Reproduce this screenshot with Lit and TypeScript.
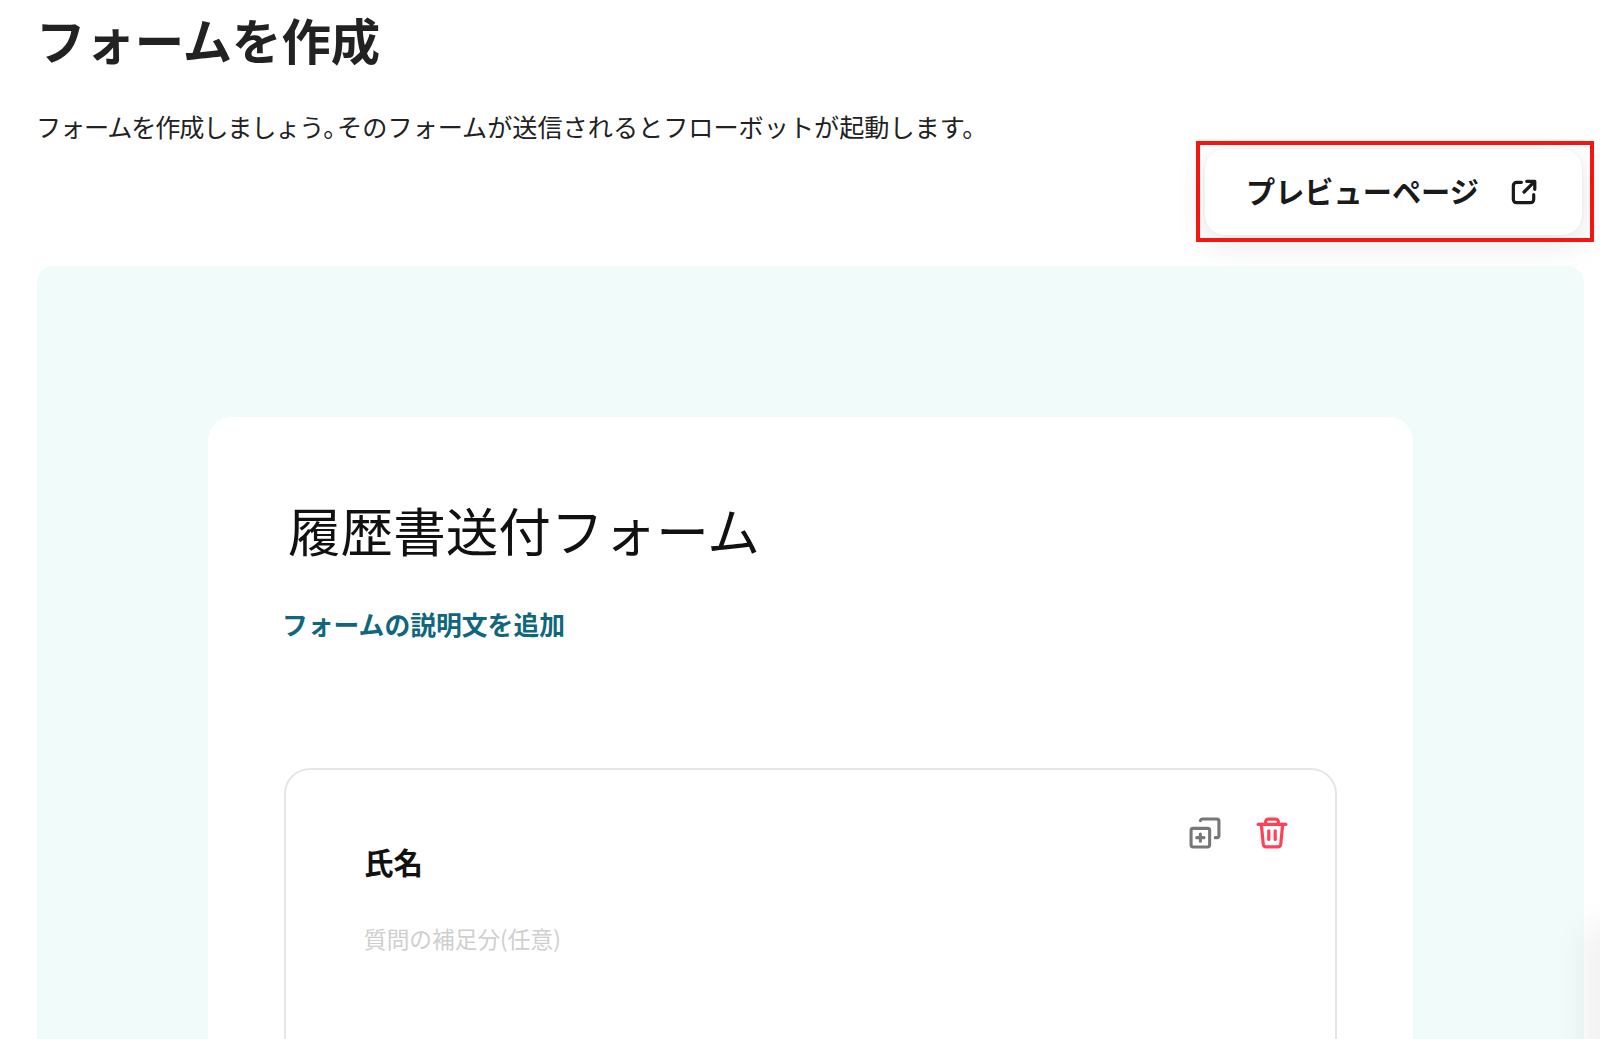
import { LitElement, css, html, svg } from 'lit'
import { customElement } from 'lit/decorators.js'

const openIcon = svg`<path d="M12.5 5H8a3 3 0 0 0-3 3v13a3 3 0 0 0 3 3h13a3 3 0 0 0 3-3v-4.5" /><path d="M15 14 24 5M17.5 4H25v7.5" />`
const copyIcon = svg`<path d="M11 3.5A2 2 0 0 1 13 2h14a2 2 0 0 1 2 2v14a2 2 0 0 1-2 2h-1.500" /><rect x="2" y="11" width="18" height="18" rx="2" /><path d="M11 16.500v7M7.500 20h7" />`
const trashIcon = svg`<path d="M2 7h26" /><path d="M9 7V4.500A2.500 2.500 0 0 1 11.500 2h7A2.500 2.500 0 0 1 21 4.500V7" /><path d="M5 7l1.800 18.500A3 3 0 0 0 9.800 28h10.400a3 3 0 0 0 3-2.500L25 7" /><path d="M12 13v8M18 13v8" />`

@customElement('app-root')
export class AppRoot extends LitElement {
  static styles = css`
    :host {
      display: block;
      position: relative;
      width: 1600px;
      height: 1039px;
      overflow: hidden;
      background: #fff;
      color: #222;
      font-family: "Noto Sans CJK JP", "Noto Sans", sans-serif;
    }
    .page {
      display: flex;
      flex-direction: column;
      padding: 7px 16px 0 36px;
    }
    h1 {
      margin: 0;
      font-size: 49.400px;
      line-height: 64px;
      font-weight: 700;
      color: #222;
    }
    .lead {
      margin: 37px 0 0;
      font-size: 25.150px;
      line-height: 36px;
      font-weight: 400;
      color: #222;
      white-space: nowrap;
    }
    /* the reference sets the first sentence tighter, with a narrow full stop */
    .tight { letter-spacing: -1.150px; }
    .stop {
      font-feature-settings: "halt";
      margin-right: 1.400px;
    }
    .toolbar {
      display: flex;
      justify-content: flex-end;
      margin-top: 5px;
      height: 117px;
    }
    .preview {
      box-sizing: border-box;
      width: 377px;
      height: 86px;
      margin-right: 2px;
      display: flex;
      align-items: center;
      padding: 0 44px 0 41px;
      justify-content: space-between;
      background: #fff;
      border-radius: 20px;
      box-shadow: 0 0 3px rgba(0, 0, 0, 0.06), 0 8px 34px rgba(0, 0, 0, 0.1);
      font-size: 29.200px;
      font-weight: 700;
      color: #1a1a1a;
    }
    .preview span { position: relative; top: -2px; }
    .preview svg {
      width: 30px;
      height: 30px;
      fill: none;
      stroke: #1a1a1a;
      stroke-width: 3;
      stroke-linecap: round;
      stroke-linejoin: round;
    }
    .callout {
      position: absolute;
      left: 1196px;
      top: 141px;
      width: 398px;
      height: 101px;
      box-sizing: border-box;
      border: 4px solid #f5170f;
      pointer-events: none;
    }
    .panel {
      height: 900px;
      margin-left: 1px;
      padding: 151px 171px 0;
      background: #f1fbfa;
      border-radius: 16px;
    }
    .form {
      height: 800px;
      box-sizing: border-box;
      padding: 73px 76px 0;
      background: #fff;
      border-radius: 24px;
    }
    .form-title {
      margin: 0 0 0 4px;
      font-size: 52.600px;
      line-height: 78px;
      font-weight: 400;
      color: #111;
    }
    .describe {
      margin: 37px 0 0 -2px;
      font-size: 25.800px;
      line-height: 38px;
      font-weight: 700;
      color: #10667c;
    }
    .question {
      position: relative;
      box-sizing: border-box;
      height: 500px;
      margin-top: 125px;
      padding: 70px 78px;
      border: 2px solid #e6e6e6;
      border-radius: 26px;
    }
    .question h3 {
      margin: 0;
      font-size: 29.500px;
      line-height: 42px;
      font-weight: 700;
      color: #111;
    }
    .hint {
      margin: 41px 0 0;
      font-size: 22.700px;
      line-height: 32px;
      font-weight: 400;
      color: #cfcfcf;
    }
    .actions {
      position: absolute;
      top: 47px;
      right: 47px;
      display: flex;
      align-items: center;
      gap: 35px;
    }
    .actions svg {
      width: 32px;
      height: 32px;
      fill: none;
      stroke-width: 3;
      stroke-linecap: round;
      stroke-linejoin: round;
    }
    .copy { stroke: #777; }
    .trash { stroke: #ff4058; }
    .edge {
      position: absolute;
      right: -42px;
      top: 920px;
      width: 60px;
      height: 160px;
      border-radius: 30px;
      background: rgba(0, 0, 0, 0.05);
      filter: blur(14px);
    }
  `

  render() {
    return html`
      <div class="page">
        <h1>フォームを作成</h1>
        <p class="lead"><span class="tight">フォームを作成しましょう</span><span class="stop">。</span>そのフォームが送信されるとフローボットが起動します。</p>
        <div class="toolbar">
          <div class="preview">
            <span>プレビューページ</span>
            <svg viewBox="0 0 28 28">${openIcon}</svg>
          </div>
        </div>
        <div class="panel">
          <div class="form">
            <h2 class="form-title">履歴書送付フォーム</h2>
            <p class="describe">フォームの説明文を追加</p>
            <div class="question">
              <div class="actions">
                <svg class="copy" viewBox="0 0 31 31">${copyIcon}</svg>
                <svg class="trash" viewBox="0 0 30 30">${trashIcon}</svg>
              </div>
              <h3>氏名</h3>
              <p class="hint">質問の補足分(任意)</p>
            </div>
          </div>
        </div>
      </div>
      <div class="callout"></div>
      <div class="edge"></div>
    `
  }
}
